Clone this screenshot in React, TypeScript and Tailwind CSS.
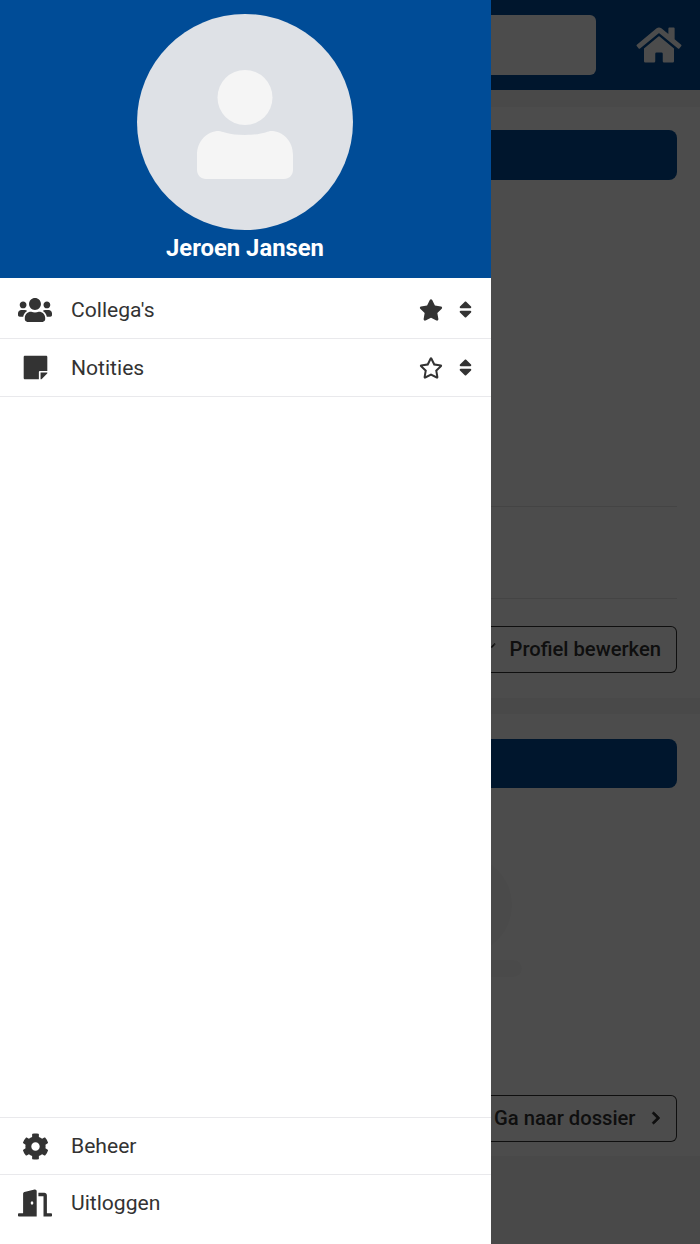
import { FaChevronRight, FaCog, FaDoorOpen, FaHome, FaPen, FaRegStar, FaSort, FaStar, FaStickyNote, FaUsers } from 'react-icons/fa'
import type { ReactNode } from 'react'

function MenuRow({ icon, label, fav, short }: { icon: ReactNode; label: string; fav?: 'on' | 'off'; short?: boolean }) {
  return (
    <div className={short ? 'flex h-[57px] shrink-0 items-center border-b border-[#e9e9ec] text-[#333333]' : 'flex h-[58px] shrink-0 items-center border-b border-[#e9e9ec] text-[#333333]'}>
      <span className="flex w-[71px] shrink-0 items-center justify-center pr-[1px]">{icon}</span>
      <span className="flex-1 text-[21.1px] leading-none">{label}</span>
      {fav && (
        <span className="flex items-center gap-[16px] pr-[19px]">
          {fav === 'on' ? <FaStar size={24} /> : <FaRegStar size={24} />}
          <FaSort className="h-[21px] w-[13px]" />
        </span>
      )}
    </div>
  )
}

export default function App() {
  return (
    <div className="relative h-[1244px] w-[700px] overflow-hidden bg-[#f5f5f5] font-['Roboto',sans-serif]">
      {/* page behind the drawer */}
      <div className="flex flex-col">
        <header className="flex h-[90px] items-center justify-between bg-[#004c97] pl-[491px] pr-[18px]">
          <div className="h-[60px] w-[105px] rounded-r-[6px] bg-white" />
          <FaHome className="h-[40px] w-[46px] text-white" />
        </header>
        <section className="mt-[17px] flex h-[591px] flex-col bg-white pl-[491px] pr-[23px] pt-[23px]">
          <div className="h-[50px] rounded-r-[8px] bg-[#004c97]" />
          <div className="mt-[326px] h-[1px] bg-[#e5e5e5]" />
          <div className="mt-[91px] h-[1px] bg-[#e5e5e5]" />
          <button className="mt-[27px] flex h-[47px] items-center justify-end gap-[14px] whitespace-nowrap rounded-r-[6px] border-[1.5px] border-l-0 border-[#333333] pr-[15px] text-[20.2px] font-medium text-[#333333]">
            <FaPen size={15} className="-mt-[8px]" />
            Profiel bewerken
          </button>
        </section>
        <section className="mt-[16px] flex h-[442px] flex-col bg-white pl-[491px] pr-[23px] pt-[25px]">
          <div className="h-[49px] rounded-r-[8px] bg-[#004c97]" />
          <div className="-ml-[79px] mt-[67px] h-[100px] w-[100px] rounded-full bg-[#f9f9f9]" />
          <div className="-ml-[79px] mt-[5px] h-[17px] w-[110px] rounded-[14px] bg-[#f9f9f9]" />
          <button className="mt-[118px] flex h-[47px] items-center justify-between whitespace-nowrap rounded-r-[6px] border-[1.5px] border-l-0 border-[#333333] pl-[3px] pr-[13px] text-[20.2px] font-medium text-[#333333]">
            Ga naar dossier
            <FaChevronRight size={14} className="-mt-[2px] stroke-[30]" />
          </button>
        </section>
      </div>

      {/* dimmed backdrop */}
      <div className="absolute inset-0 bg-black/70" />

      {/* drawer */}
      <aside className="absolute inset-y-0 left-0 flex w-[491px] flex-col bg-white">
        <div className="flex h-[278px] shrink-0 flex-col items-center bg-[#004c97] pr-[1px] pt-[14px]">
          <div className="flex h-[216px] w-[216px] items-center justify-center rounded-full bg-[#dee1e6]">
            <svg viewBox="0 0 96 110" className="mt-[6px] h-[110px] w-[96px] text-[#f5f5f5]" fill="currentColor">
              <circle cx="48" cy="27.5" r="27.5" />
              <path d="M22 61c3 0 9 4 26 4s23-4 26-4c12 0 22 10 22 24v15c0 5-4 9-9 9H9c-5 0-9-4-9-9V85c0-14 10-24 22-24z" />
            </svg>
          </div>
          <div className="mt-[5px] text-[23.8px] font-bold leading-[26px] text-white">Jeroen Jansen</div>
        </div>
        <div className="flex-1 pt-[3px]">
          <MenuRow icon={<FaUsers size={34} />} label="Collega's" fav="on" />
          <MenuRow icon={<FaStickyNote size={27} />} label="Notities" fav="off" />
        </div>
        <div className="border-t border-[#e9e9ec] pb-[14px]">
          <MenuRow icon={<FaCog size={27} />} label="Beheer" short />
          <div className="flex h-[55px] items-center text-[#333333]">
            <span className="flex w-[71px] shrink-0 items-center justify-center pr-[1px]">
              <FaDoorOpen size={34} />
            </span>
            <span className="text-[21.1px] leading-none">Uitloggen</span>
          </div>
        </div>
      </aside>
    </div>
  )
}
